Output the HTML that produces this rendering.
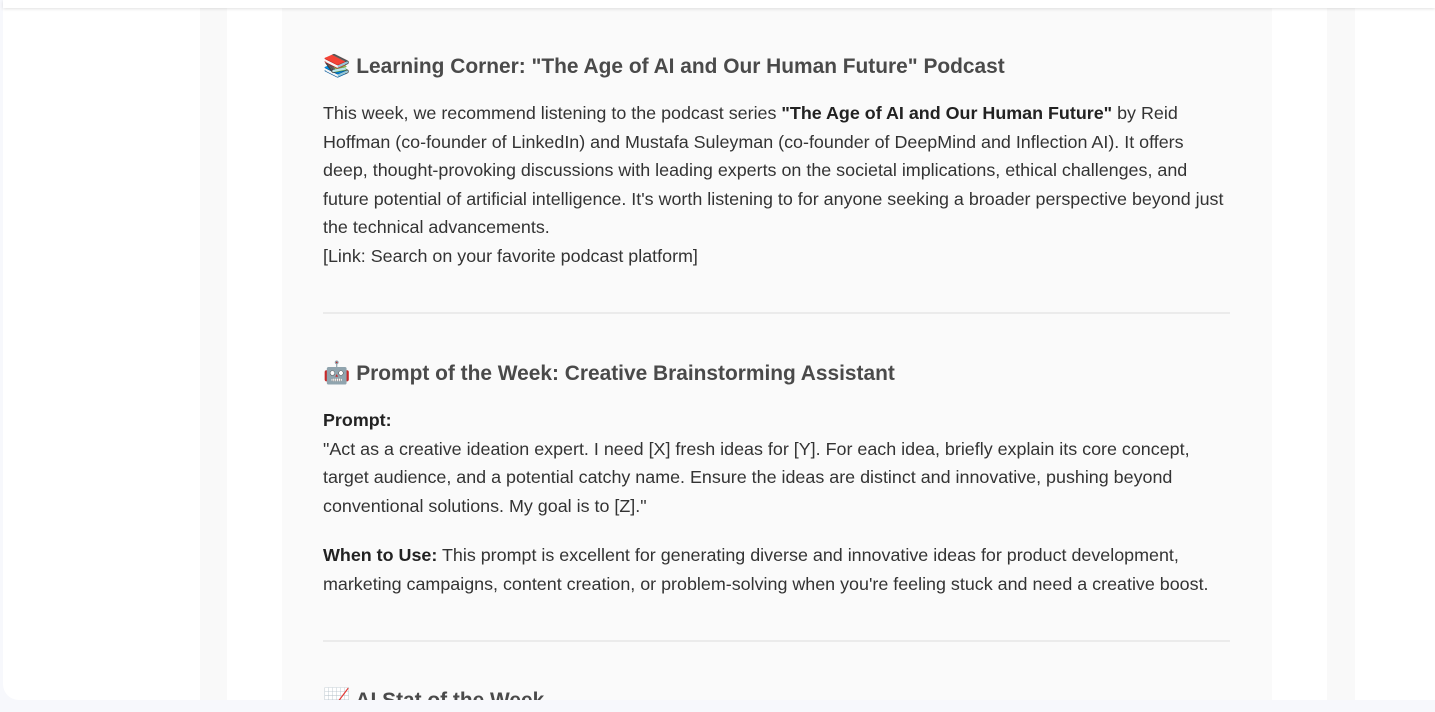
<!DOCTYPE html>
<html><head><meta charset="utf-8"><style>
*{margin:0;padding:0;box-sizing:border-box}
html,body{width:1435px;height:712px;overflow:hidden;background:#f7f8fc;font-family:"Liberation Sans",Arial,sans-serif}
.card{position:absolute;left:3px;top:0;width:1432px;height:700px;background:#fff;border-bottom-left-radius:16px;overflow:hidden}
.topbar{position:absolute;left:3px;top:0;width:1432px;height:8px;background:#fff;box-shadow:0 1px 3px rgba(0,0,0,.12);z-index:5}
.g1{position:absolute;left:197px;top:0;width:27px;height:700px;background:#f9f9f9}
.g2{position:absolute;left:1324px;top:0;width:28px;height:700px;background:#f9f9f9}
.content{position:absolute;left:279px;top:0;width:990px;height:700px;background:#fafafa;overflow:hidden}
.inner{position:absolute;left:41px;top:0;width:907px;color:#333;font-size:17.9px;line-height:28.5px}
h2{font-size:20.9px;color:#4a4a4a;font-weight:bold;line-height:28px}
p b{color:#222}
hr{border:0;height:2px;background:#ebebeb}
.e{font-family:"Noto Color Emoji","DejaVu Sans",sans-serif;font-weight:normal;font-size:22px}
</style></head><body>
<div class="card">
<div class="g1"></div><div class="g2"></div>
<div class="content"><div class="inner">
<h2 style="position:absolute;top:53px;white-space:nowrap"><span class="e">📚</span> Learning Corner: "The Age of AI and Our Human Future" Podcast</h2>
<p style="position:absolute;top:99px;width:907px">This week, we recommend listening to the podcast series <b>"The Age of AI and Our Human Future"</b> by Reid Hoffman (co-founder of LinkedIn) and Mustafa Suleyman (co-founder of DeepMind and Inflection AI). It offers deep, thought-provoking discussions with leading experts on the societal implications, ethical challenges, and future potential of artificial intelligence. It's worth listening to for anyone seeking a broader perspective beyond just the technical advancements.<br>[Link: Search on your favorite podcast platform]</p>
<hr style="position:absolute;top:312px;width:907px">
<h2 style="position:absolute;top:360px;white-space:nowrap"><span class="e">🤖</span> Prompt of the Week: Creative Brainstorming Assistant</h2>
<p style="position:absolute;top:406px;width:907px"><b>Prompt:</b><br>"Act as a creative ideation expert. I need [X] fresh ideas for [Y]. For each idea, briefly explain its core concept, target audience, and a potential catchy name. Ensure the ideas are distinct and innovative, pushing beyond conventional solutions. My goal is to [Z]."</p>
<p style="position:absolute;top:541px;width:907px"><b>When to Use:</b> This prompt is excellent for generating diverse and innovative ideas for product development, marketing campaigns, content creation, or problem-solving when you're feeling stuck and need a creative boost.</p>
<hr style="position:absolute;top:640px;width:907px">
<h2 style="position:absolute;top:687px;white-space:nowrap"><span class="e">📈</span> AI Stat of the Week</h2>
</div></div>
</div>
<div class="topbar"></div>
</body></html>
